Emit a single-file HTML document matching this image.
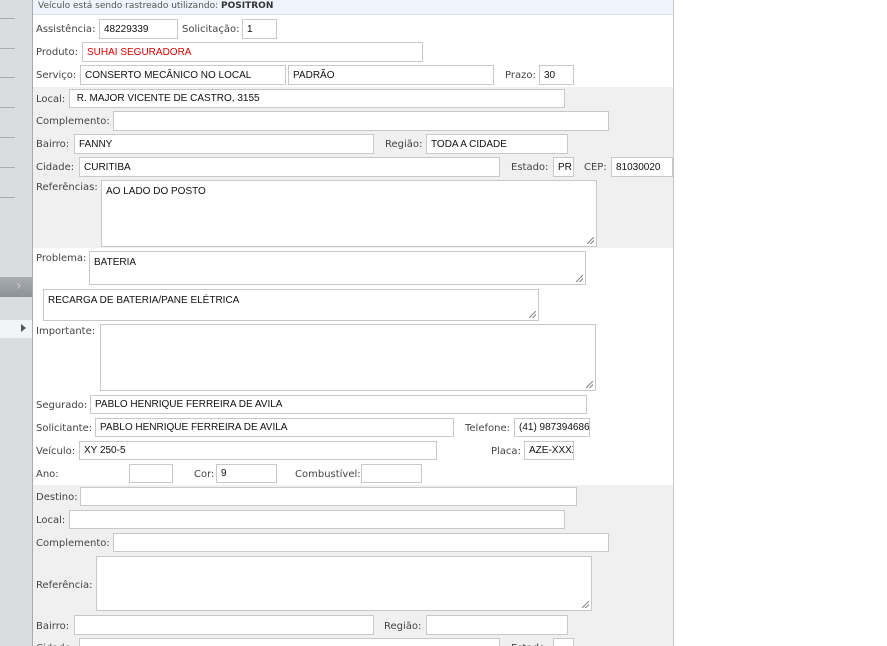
<!DOCTYPE html>
<html><head><meta charset="utf-8">
<style>
*{margin:0;padding:0;box-sizing:border-box}
html{width:887px;height:646px;overflow:hidden}
body{width:887px;height:646px;overflow:hidden;background:#fff;position:relative;font-family:"DejaVu Sans","Liberation Sans",sans-serif;font-size:10px;color:#444}
.a{position:absolute}
.l{position:absolute;font-size:10px;color:#444;white-space:nowrap;margin-top:1px}
.i{position:absolute;background:#fff;border:1px solid #c8c8c8;font-family:"Liberation Sans",sans-serif;font-size:10px;color:#111;padding:0 0 0 4px;white-space:nowrap;overflow:hidden;display:flex;align-items:center}
.t{align-items:flex-start;padding-top:5px}
.rz::after{content:"";position:absolute;right:2px;bottom:2px;width:7px;height:7px;background:linear-gradient(135deg,transparent 45%,#888 45%,#888 55%,transparent 55%,transparent 70%,#888 70%,#888 80%,transparent 80%)}
.sl{position:absolute;left:0;width:15px;height:1px;background:#a9adb1}
</style></head><body>
<div class="a" style="left:0;top:0;width:32px;height:646px;background:#dadde0"></div>
<div class="a" style="left:32px;top:0;width:1px;height:646px;background:#a8abae"></div>
<div class="sl" style="top:18px"></div><div class="sl" style="top:48px"></div><div class="sl" style="top:77px"></div><div class="sl" style="top:107px"></div><div class="sl" style="top:137px"></div><div class="sl" style="top:167px"></div><div class="sl" style="top:197px"></div>
<div class="a" style="left:0;top:277px;width:32px;height:20px;background:linear-gradient(#a9adb2,#8d9297)"></div>
<div class="a" style="left:16px;top:278px;color:#c9ccd0;font-size:14px">&#8250;</div>
<div class="a" style="left:0;top:320px;width:32px;height:18px;background:#f2f3f4"></div>
<div class="a" style="left:21px;top:324px;width:0;height:0;border-left:5px solid #555;border-top:4px solid transparent;border-bottom:4px solid transparent"></div>

<div class="a" style="left:33px;top:0;width:641px;height:15px;background:#eef4fb;border-bottom:1px solid #d5dde6"></div>
<div class="a" style="left:38px;top:1px;font-size:9px;color:#555">Veículo está sendo rastreado utilizando: <b style="color:#333">POSITRON</b></div>
<div class="a" style="left:33px;top:87px;width:641px;height:161px;background:#f0f0f0"></div>
<div class="a" style="left:33px;top:485px;width:641px;height:161px;background:#f0f0f0"></div>
<div class="a" style="left:673px;top:0;width:1px;height:646px;background:#c8c8c8"></div>

<div class="l" style="left:36px;top:23px">Assistência:</div><div class="i" style="left:99px;top:19px;width:79px;height:20px">48229339</div>
<div class="l" style="left:182px;top:23px">Solicitação:</div><div class="i" style="left:242px;top:19px;width:35px;height:20px">1</div>
<div class="l" style="left:36px;top:46px">Produto:</div><div class="i" style="left:82px;top:42px;width:341px;height:20px;color:#d00">SUHAI SEGURADORA</div>
<div class="l" style="left:36px;top:69px">Serviço:</div><div class="i" style="left:80px;top:65px;width:206px;height:20px">CONSERTO MECÂNICO NO LOCAL</div><div class="i" style="left:288px;top:65px;width:206px;height:20px">PADRÃO</div>
<div class="l" style="left:505px;top:69px">Prazo:</div><div class="i" style="left:539px;top:65px;width:35px;height:20px">30</div>

<div class="l" style="left:36px;top:93px">Local:</div><div class="i" style="left:69px;top:89px;width:496px;height:19px">&nbsp;R. MAJOR VICENTE DE CASTRO, 3155</div>
<div class="l" style="left:36px;top:115px">Complemento:</div><div class="i" style="left:113px;top:111px;width:496px;height:20px"></div>
<div class="l" style="left:36px;top:138px">Bairro:</div><div class="i" style="left:74px;top:134px;width:300px;height:20px">FANNY</div>
<div class="l" style="left:385px;top:138px">Região:</div><div class="i" style="left:426px;top:134px;width:142px;height:20px">TODA A CIDADE</div>
<div class="l" style="left:36px;top:161px">Cidade:</div><div class="i" style="left:79px;top:157px;width:421px;height:20px">CURITIBA</div>
<div class="l" style="left:511px;top:161px">Estado:</div><div class="i" style="left:553px;top:157px;width:21px;height:20px">PR</div>
<div class="l" style="left:584px;top:161px">CEP:</div><div class="i" style="left:611px;top:157px;width:62px;height:20px">81030020</div>
<div class="l" style="left:36px;top:181px">Referências:</div><div class="i t rz" style="left:101px;top:180px;width:496px;height:67px">AO LADO DO POSTO</div>

<div class="l" style="left:36px;top:252px">Problema:</div><div class="i t rz" style="left:89px;top:251px;width:497px;height:34px">BATERIA</div>
<div class="i t rz" style="left:43px;top:289px;width:496px;height:32px">RECARGA DE BATERIA/PANE ELÉTRICA</div>
<div class="l" style="left:36px;top:325px">Importante:</div><div class="i t rz" style="left:100px;top:324px;width:496px;height:67px"></div>
<div class="l" style="left:36px;top:399px">Segurado:</div><div class="i" style="left:90px;top:395px;width:497px;height:19px">PABLO HENRIQUE FERREIRA DE AVILA</div>
<div class="l" style="left:36px;top:422px">Solicitante:</div><div class="i" style="left:95px;top:418px;width:359px;height:19px">PABLO HENRIQUE FERREIRA DE AVILA</div>
<div class="l" style="left:465px;top:422px">Telefone:</div><div class="i" style="left:514px;top:418px;width:76px;height:19px">(41) 987394686</div>
<div class="l" style="left:36px;top:445px">Veículo:</div><div class="i" style="left:79px;top:441px;width:358px;height:19px">XY 250-5</div>
<div class="l" style="left:491px;top:445px">Placa:</div><div class="i" style="left:524px;top:441px;width:50px;height:19px">AZE-XXXX</div>
<div class="l" style="left:36px;top:468px">Ano:</div><div class="i" style="left:129px;top:464px;width:44px;height:19px"></div>
<div class="l" style="left:194px;top:468px">Cor:</div><div class="i" style="left:216px;top:464px;width:61px;height:19px">9</div>
<div class="l" style="left:295px;top:468px">Combustível:</div><div class="i" style="left:361px;top:464px;width:61px;height:19px"></div>

<div class="l" style="left:36px;top:491px">Destino:</div><div class="i" style="left:80px;top:487px;width:497px;height:19px"></div>
<div class="l" style="left:36px;top:514px">Local:</div><div class="i" style="left:69px;top:510px;width:496px;height:19px"></div>
<div class="l" style="left:36px;top:537px">Complemento:</div><div class="i" style="left:113px;top:533px;width:496px;height:19px"></div>
<div class="l" style="left:36px;top:579px">Referência:</div><div class="i t rz" style="left:96px;top:556px;width:496px;height:55px"></div>
<div class="l" style="left:36px;top:620px">Bairro:</div><div class="i" style="left:74px;top:615px;width:300px;height:20px"></div>
<div class="l" style="left:384px;top:620px">Região:</div><div class="i" style="left:426px;top:615px;width:142px;height:20px"></div>
<div class="l" style="left:36px;top:642px">Cidade:</div><div class="i" style="left:79px;top:638px;width:421px;height:20px"></div>
<div class="l" style="left:511px;top:642px">Estado:</div><div class="i" style="left:553px;top:638px;width:21px;height:20px"></div>
</body></html>
